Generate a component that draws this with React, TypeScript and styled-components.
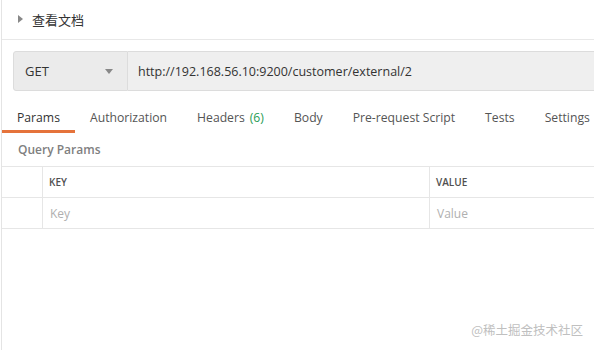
import * as React from "react";
import styled, { createGlobalStyle } from "styled-components";

const GlobalStyle = createGlobalStyle`
  html, body {
    margin: 0;
    padding: 0;
    background: #fff;
  }
  body {
    font-family: "Open Sans", "Noto Sans CJK SC", sans-serif;
    color: #333;
  }
`;

const Page = styled.div`
  position: relative;
  width: 592px;
  height: 350px;
  margin-left: 1px;
  border-left: 1px solid #e4e4e4;
  overflow: hidden;
`;

const DocHeader = styled.div`
  display: flex;
  align-items: center;
  height: 39px;
  padding-left: 16px;
  border-bottom: 1px solid #e8e8e8;
  font-family: "Noto Sans CJK SC", sans-serif;
  font-size: 13px;
  color: #333;
`;

const Caret = styled.span`
  width: 0;
  height: 0;
  border-top: 4px solid transparent;
  border-bottom: 4px solid transparent;
  border-left: 5px solid #888;
  margin-right: 9px;
  margin-top: -1px;
`;

const UrlRow = styled.div`
  display: flex;
  height: 40px;
  margin: 11px 0 0 11px;
`;

const Method = styled.div`
  display: flex;
  align-items: center;
  justify-content: space-between;
  width: 115px;
  box-sizing: border-box;
  padding: 0 14px 0 11px;
  background: #ebebeb;
  border: 1px solid #dcdcdc;
  border-radius: 3px 0 0 3px;
  font-size: 13px;
  color: #333;
`;

const DropArrow = styled.span`
  width: 0;
  height: 0;
  border-left: 4px solid transparent;
  border-right: 4px solid transparent;
  border-top: 5px solid #888;
`;

const UrlInput = styled.div`
  flex: 1;
  display: flex;
  align-items: center;
  padding-left: 10px;
  background: #efefef;
  border-top: 1px solid #dcdcdc;
  border-bottom: 1px solid #dcdcdc;
  font-size: 12.5px;
  color: #333;
  white-space: nowrap;
`;

const Tabs = styled.div`
  display: flex;
  height: 42px;
  white-space: nowrap;
`;

const Tab = styled.div<{ $active?: boolean }>`
  display: flex;
  align-items: center;
  padding: 14px 15px 0;
  font-size: 12.2px;
  color: ${(p) => (p.$active ? "#333" : "#555")};
  border-bottom: 3px solid ${(p) => (p.$active ? "#e5733b" : "transparent")};
  box-sizing: border-box;
`;

const Count = styled.span`
  color: #2a9d56;
  margin-left: 5px;
`;

const SectionTitle = styled.div`
  display: flex;
  align-items: center;
  height: 33px;
  padding-left: 16px;
  font-size: 12px;
  font-weight: 600;
  color: #808080;
`;

const Table = styled.div`
  display: grid;
  grid-template-columns: 40px 387px 1fr;
`;

const Cell = styled.div<{ $head?: boolean; $first?: boolean }>`
  display: flex;
  align-items: center;
  height: 31px;
  box-sizing: border-box;
  padding-left: ${(p) => (p.$head ? "6px" : "7px")};
  border-top: 1px solid #e6e6e6;
  border-left: ${(p) => (p.$first ? "none" : "1px solid #e6e6e6")};
  font-size: ${(p) => (p.$head ? "10px" : "12px")};
  font-weight: ${(p) => (p.$head ? 600 : 400)};
  color: ${(p) => (p.$head ? "#505050" : "#b0b0b0")};
`;

const TableEnd = styled.div`
  grid-column: 1 / -1;
  border-top: 1px solid #e6e6e6;
`;

const Watermark = styled.div`
  position: absolute;
  right: 11px;
  bottom: 11px;
  font-family: "Noto Sans CJK SC", sans-serif;
  font-size: 12.5px;
  color: #c0c0c0;
`;

const tabs = [
  "Params",
  "Authorization",
  "Headers",
  "Body",
  "Pre-request Script",
  "Tests",
  "Settings",
];

export default function App() {
  return (
    <>
      <GlobalStyle />
      <Page>
        <DocHeader>
          <Caret />
          查看文档
        </DocHeader>
        <UrlRow>
          <Method>
            GET
            <DropArrow />
          </Method>
          <UrlInput>http://192.168.56.10:9200/customer/external/2</UrlInput>
        </UrlRow>
        <Tabs>
          {tabs.map((t, i) => (
            <Tab key={t} $active={i === 0}>
              {t}
              {t === "Headers" && <Count>(6)</Count>}
            </Tab>
          ))}
        </Tabs>
        <SectionTitle>Query Params</SectionTitle>
        <Table>
          <Cell $head $first />
          <Cell $head>KEY</Cell>
          <Cell $head>VALUE</Cell>
          <Cell $first />
          <Cell>Key</Cell>
          <Cell>Value</Cell>
          <TableEnd />
        </Table>
        <Watermark>@稀土掘金技术社区</Watermark>
      </Page>
    </>
  );
}
